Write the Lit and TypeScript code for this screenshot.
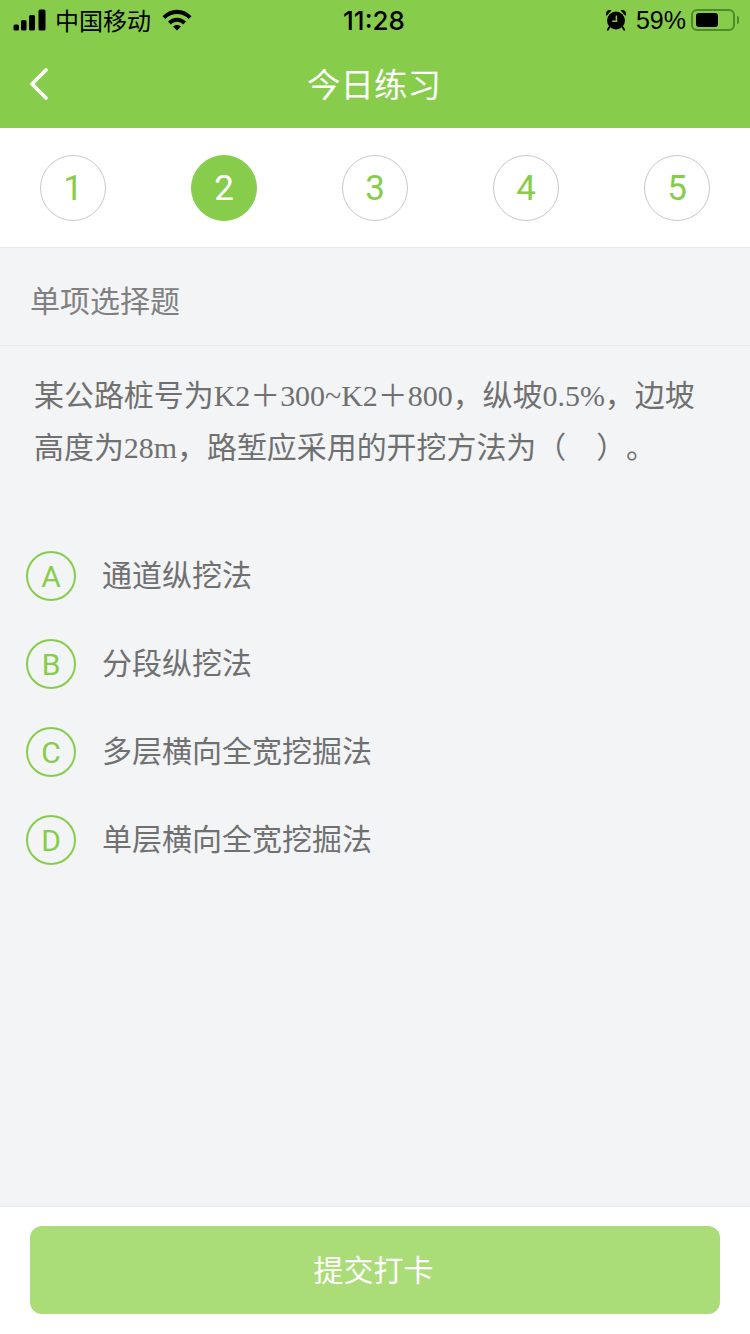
import {css, html, LitElement, svg} from 'lit';
import {customElement} from 'lit/decorators.js';

const STEPS = [1, 2, 3, 4, 5];
const CURRENT_STEP = 2;

const OPTIONS = [
  {key: 'A', text: '通道纵挖法'},
  {key: 'B', text: '分段纵挖法'},
  {key: 'C', text: '多层横向全宽挖掘法'},
  {key: 'D', text: '单层横向全宽挖掘法'},
];

const signalIcon = svg`<svg class="signal" width="34" height="22" viewBox="0 0 34 22">
  <rect x="0.5" y="15.5" width="5.5" height="6" rx="1.5"/>
  <rect x="8" y="11" width="5.5" height="10.5" rx="1.5"/>
  <rect x="16" y="6" width="6" height="15.5" rx="1.5"/>
  <rect x="25.5" y="0.5" width="7" height="21" rx="1.5"/>
</svg>`;

const wifiIcon = svg`<svg class="wifi" width="30" height="22" viewBox="0 0 30 22">
  <path d="M0.5 7.2C8.6 -1.4 21.4 -1.4 29.5 7.2L26.8 10C20.2 3.2 9.8 3.2 3.2 10Z"/>
  <path d="M6 12.6C11 7.4 19 7.4 24 12.6L21.2 15.4C17.6 11.8 12.4 11.8 8.8 15.4Z"/>
  <path d="M11 17.6C13.2 15.4 16.8 15.4 19 17.6L15 21.6Z"/>
</svg>`;

const alarmIcon = svg`<svg class="alarm" width="22" height="22" viewBox="0 0 22 22">
  <path d="M1.4 7C-0.2 3.4 2.6 0 6.4 1.4Z"/>
  <path d="M20.6 7C22.2 3.4 19.4 0 15.6 1.4Z"/>
  <circle cx="11" cy="11.5" r="9"/>
  <path d="M4.4 18L2.8 20.8M17.6 18L19.2 20.8" stroke="#000" stroke-width="1.8" stroke-linecap="round" fill="none"/>
  <path d="M11.4 6.4V12.2H7.2" stroke="#87cd4b" stroke-width="1.5" fill="none"/>
</svg>`;

const backIcon = svg`<svg width="20" height="32" viewBox="0 0 20 32">
  <path d="M17 2L3 16L17 30" fill="none" stroke="#fff" stroke-width="3.6" stroke-linecap="round" stroke-linejoin="round"/>
</svg>`;

@customElement('app-root')
export class AppRoot extends LitElement {
  static styles = css`
    :host {
      display: flex;
      flex-direction: column;
      min-height: 1334px;
      background: #f2f4f6;
      font-family: 'Liberation Sans', 'Noto Sans CJK SC', sans-serif;
      color: #666;
    }

    .header {
      background: #87cd4b;
      height: 128px;
      display: flex;
      flex-direction: column;
    }

    .status {
      height: 40px;
      display: grid;
      grid-template-columns: 1fr auto 1fr;
      align-items: center;
      padding: 0 13px;
      color: #000;
      font-size: 25px;
    }

    .status-left,
    .status-right {
      display: flex;
      align-items: center;
    }

    .status-right {
      justify-content: flex-end;
      padding-right: 2px;
    }

    .carrier {
      margin-left: 8px;
      font-size: 24px;
      position: relative;
      top: -1px;
    }

    .wifi {
      margin-left: 11px;
    }

    .time {
      font-family: 'Inter', 'Liberation Sans', sans-serif;
      font-size: 26px;
      font-weight: 500;
      position: relative;
      left: -1px;
    }

    .percent {
      margin-left: 9px;
      font-size: 25px;
    }

    .battery {
      margin-left: 5px;
      width: 44px;
      height: 22px;
      box-sizing: border-box;
      border: 2px solid #4f8a2c;
      border-radius: 6px;
      padding: 2px 3px;
      position: relative;
    }

    .battery i {
      display: block;
      width: 22px;
      height: 14px;
      background: #000;
      border-radius: 3px;
    }

    .battery::after {
      content: '';
      position: absolute;
      right: -6px;
      top: 5px;
      width: 2px;
      height: 8px;
      background: #4f8a2c;
      border-radius: 0 2px 2px 0;
    }

    .nav {
      flex: 1;
      display: grid;
      grid-template-columns: 1fr auto 1fr;
      align-items: center;
      padding: 0 31px 0 29px;
      color: #fff;
      font-size: 33.5px;
    }

    .nav svg {
      display: block;
    }

    .nav span {
      position: relative;
      top: -2px;
    }

    .steps {
      background: #fff;
      height: 120px;
      padding: 27px 40px 0;
      box-sizing: border-box;
      border-bottom: 1px solid #e9e9e9;
      display: flex;
      justify-content: space-between;
      align-items: flex-start;
    }

    .step {
      width: 66px;
      height: 66px;
      box-sizing: border-box;
      border: 1px solid #c9c9c9;
      border-radius: 50%;
      display: flex;
      align-items: center;
      justify-content: center;
      color: #87cd4b;
      font-family: 'Roboto', 'Liberation Sans', sans-serif;
      font-size: 35px;
    }

    .step.current {
      background: #87cd4b;
      border-color: #87cd4b;
      color: #fff;
    }

    .section {
      height: 98px;
      box-sizing: border-box;
      border-bottom: 1px solid #e9ebee;
      padding: 4px 0 0 30px;
      display: flex;
      align-items: center;
      font-size: 30px;
      color: #808080;
    }

    .question {
      margin: 0;
      padding: 24px 34px 0;
      font-family: 'Liberation Serif', 'Noto Sans CJK SC', serif;
      font-size: 29.95px;
      line-height: 52px;
      color: #707070;
      text-spacing-trim: space-all;
    }

    .options {
      margin-top: 77px;
      padding-left: 26px;
      display: flex;
      flex-direction: column;
      gap: 38px;
    }

    .option {
      display: flex;
      align-items: center;
      height: 50px;
      font-size: 30px;
    }

    .badge {
      width: 50px;
      height: 50px;
      box-sizing: border-box;
      border: 2px solid #87cd4b;
      border-radius: 50%;
      margin-right: 26px;
      display: flex;
      align-items: center;
      justify-content: center;
      color: #87cd4b;
      font-family: 'Roboto', 'Liberation Sans', sans-serif;
      font-size: 30px;
    }

    .label {
      position: relative;
      top: -3px;
      color: #707070;
    }

    .spacer {
      flex: 1;
    }

    .footer {
      background: #fff;
      border-top: 1px solid #e9e9e9;
      padding: 19px 30px 20px;
    }

    .submit {
      display: block;
      width: 100%;
      height: 88px;
      border: 0;
      border-radius: 12px;
      background: #aadc78;
      color: #fff;
      font: inherit;
      font-size: 30px;
      padding: 0 3px 4px 0;
    }
  `;

  render() {
    return html`
      <header class="header">
        <div class="status">
          <div class="status-left">
            ${signalIcon}
            <span class="carrier">中国移动</span>
            ${wifiIcon}
          </div>
          <span class="time">11:28</span>
          <div class="status-right">
            ${alarmIcon}
            <span class="percent">59%</span>
            <div class="battery"><i></i></div>
          </div>
        </div>
        <div class="nav">
          ${backIcon}
          <span>今日练习</span>
        </div>
      </header>
      <div class="steps">
        ${STEPS.map(
          (n) =>
            html`<div class="step ${n === CURRENT_STEP ? 'current' : ''}">${n}</div>`,
        )}
      </div>
      <div class="section">单项选择题</div>
      <p class="question">
        某公路桩号为K2＋300~K2＋800，纵坡0.5%，边坡高度为28m，路堑应采用的开挖方法为（&emsp;）。
      </p>
      <div class="options">
        ${OPTIONS.map(
          (o) =>
            html`<div class="option">
              <span class="badge">${o.key}</span>
              <span class="label">${o.text}</span>
            </div>`,
        )}
      </div>
      <div class="spacer"></div>
      <div class="footer">
        <button class="submit">提交打卡</button>
      </div>
    `;
  }
}

declare global {
  interface HTMLElementTagNameMap {
    'app-root': AppRoot;
  }
}
